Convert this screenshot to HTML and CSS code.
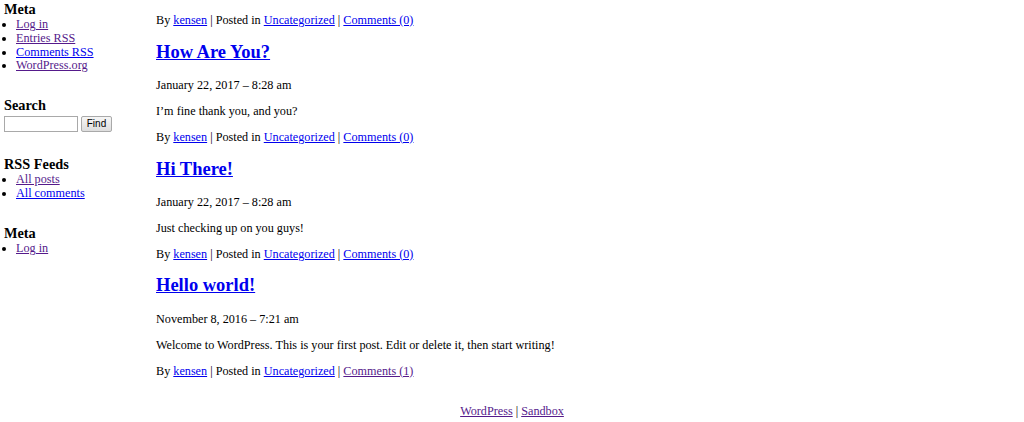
FILE: index.html
```html
<!DOCTYPE html>
<html>
<head>
    <meta charset="UTF-8">
    <title>Sandbox</title>
    <link rel="stylesheet" href="styles.css">
</head>
<body>
    <div class="wrapper">
        <div class="sidebar">
            <div class="widget">
                <h3>Meta</h3>
                <ul>
                    <li><a class="visited" href="#">Log in</a></li>
                    <li><a class="visited" href="#">Entries RSS</a></li>
                    <li><a href="#">Comments RSS</a></li>
                    <li><a class="visited" href="#">WordPress.org</a></li>
                </ul>
            </div>

            <div class="widget">
                <h3>Search</h3>
                <form class="search-form">
                    <input type="text" class="search-input">
                    <button type="button" class="search-btn">Find</button>
                </form>
            </div>

            <div class="widget">
                <h3>RSS Feeds</h3>
                <ul>
                    <li><a class="visited" href="#">All posts</a></li>
                    <li><a href="#">All comments</a></li>
                </ul>
            </div>

            <div class="widget">
                <h3>Meta</h3>
                <ul>
                    <li><a class="visited" href="#">Log in</a></li>
                </ul>
            </div>
        </div>

        <div class="content">
            <p class="entry-meta">By <a href="#">kensen</a> | Posted in <a href="#">Uncategorized</a> | <a href="#">Comments (0)</a></p>

            <div class="post">
                <h2 class="entry-title"><a href="#">How Are You?</a></h2>
                <p class="entry-date">January 22, 2017 – 8:28 am</p>
                <p>I’m fine thank you, and you?</p>
                <p class="entry-meta">By <a href="#">kensen</a> | Posted in <a href="#">Uncategorized</a> | <a href="#">Comments (0)</a></p>
            </div>

            <div class="post">
                <h2 class="entry-title"><a href="#">Hi There!</a></h2>
                <p class="entry-date">January 22, 2017 – 8:28 am</p>
                <p>Just checking up on you guys!</p>
                <p class="entry-meta">By <a href="#">kensen</a> | Posted in <a href="#">Uncategorized</a> | <a href="#">Comments (0)</a></p>
            </div>

            <div class="post">
                <h2 class="entry-title"><a href="#">Hello world!</a></h2>
                <p class="entry-date">November 8, 2016 – 7:21 am</p>
                <p>Welcome to WordPress. This is your first post. Edit or delete it, then start writing!</p>
                <p class="entry-meta">By <a href="#">kensen</a> | Posted in <a href="#">Uncategorized</a> | <a class="visited" href="#">Comments (1)</a></p>
            </div>
        </div>
    </div>

    <div class="footer">
        <a class="visited" href="#">WordPress</a> | <a class="visited" href="#">Sandbox</a>
    </div>
</body>
</html>
```

FILE: styles.css
```css
body {
    margin: 0;
    font-family: 'Liberation Serif', 'Times New Roman', serif;
    font-size: 12.2px;
    line-height: 13.8px;
    color: #000000;
    background: #ffffff;
}

a {
    color: #0000ee;
}

a.visited {
    color: #551a8b;
}

.wrapper {
    display: flex;
}

.sidebar {
    flex: 0 0 156px;
    box-sizing: border-box;
    padding-left: 4px;
}

.widget + .widget {
    margin-top: 23px;
}

h3 {
    margin: 0;
    font-size: 14.3px;
    line-height: 18px;
}

.sidebar ul {
    margin: 0;
    padding-left: 12px;
}

.search-form {
    display: flex;
    gap: 3px;
    margin-top: 2px;
    height: 16px;
}

.search-input {
    box-sizing: border-box;
    width: 74px;
    height: 16px;
    margin: 0;
    padding: 0 2px;
    border: 1px solid #a9a9a9;
    font-size: 10px;
}

.search-btn {
    box-sizing: border-box;
    width: 31px;
    height: 16px;
    margin: 0;
    padding: 0;
    border: 1px solid #a9a9a9;
    border-radius: 2px;
    background: linear-gradient(#f6f6f6, #dddddd);
    font-family: 'Liberation Sans', Arial, sans-serif;
    font-size: 10px;
    line-height: 14px;
    color: #000000;
}

.content {
    flex: 1;
    padding-top: 14px;
}

.content p {
    margin: 12px 0;
}

.content .entry-date {
    margin-bottom: 11px;
}

.content > .entry-meta {
    margin-top: 0;
}

.post:last-child .entry-meta {
    margin-bottom: 0;
}

.entry-title {
    margin: 13.9px 0 16.9px;
    font-size: 18.5px;
    line-height: 20.7px;
}

.footer {
    margin-top: 27px;
    text-align: center;
}
```
